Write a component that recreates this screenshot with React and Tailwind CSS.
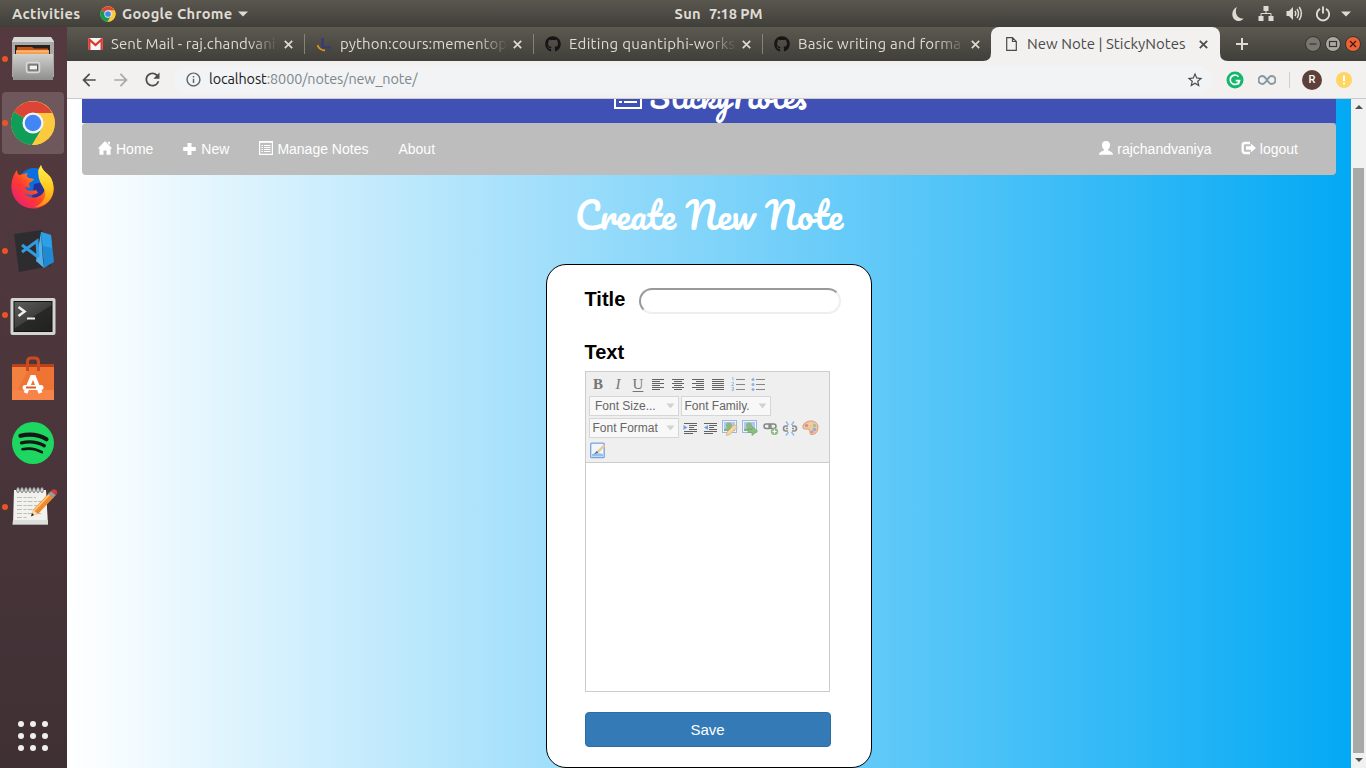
import React from "react";
import { MdArrowBack, MdArrowForward, MdRefresh, MdInfoOutline, MdStarBorder } from "react-icons/md";
import { FaGithub } from "react-icons/fa";

const UI = "font-['Ubuntu','Noto_Sans','Open_Sans',sans-serif]";

function ChromeLogo({ size }) {
  return (
    <svg width={size} height={size} viewBox="0 0 48 48">
      <circle cx="24" cy="24" r="23" fill="#fdc93e" />
      <path d="M24 24 L4.1 12.5 A23 23 0 0 1 43.9 13.5 L24 13.5 Z" fill="#db4437" />
      <path d="M24 24 L4.1 12.5 A23 23 0 0 0 23 47 L33.5 29.5 Z" fill="#109d58" />
      <path d="M24 13.5 H43.9 A23 23 0 0 1 23 47 L33.5 29.5 Z" fill="#fdc93e" />
      <circle cx="24" cy="24" r="11" fill="#f4f4f4" />
      <circle cx="24" cy="24" r="8.6" fill="#4285f4" />
    </svg>
  );
}

function TopBar() {
  return (
    <header className={`grid h-[27px] shrink-0 grid-cols-3 items-center bg-linear-to-b from-[#5a574f] to-[#403f3a] text-[14.67px] font-bold text-[#dfdbd2] ${UI}`}>
      <div className="flex items-center pl-3">
        <span className="w-[88px] whitespace-nowrap tracking-[0.32px]">Activities</span>
        <ChromeLogo size={16} />
        <span className="ml-[6px] w-[111px] whitespace-nowrap tracking-[0.3px]">Google Chrome</span>
        <svg className="ml-[5px]" width="10" height="6"><path d="M0 0.5H10L5 5.5Z" fill="#dfdbd2" /></svg>
      </div>
      <div className="flex justify-center gap-[8px] pl-[71px] whitespace-nowrap"><span className="tracking-[0.3px]">Sun</span><span className="tracking-[-0.1px]">7:18 PM</span></div>
      <div className="flex items-center justify-end pr-[15px]">
        <svg width="14" height="16" viewBox="0 0 14 16" className="mr-[13px]"><path d="M6 1 C-1 4 0 15 8 15 C10 15 11.500 14 12.500 12.600 C6 13 3 6 6 1Z" fill="#dfdbd2" /></svg>
        <svg width="16" height="15" viewBox="0 0 16 15" className="mr-[12px]"><path d="M5.500 0h5v5h-5zM0.500 10h5v5h-5zM10.500 10h5v5h-5z" fill="#dfdbd2" /><path d="M8 5v2.500M3 10V7.500H13V10" fill="none" stroke="#dfdbd2" /></svg>
        <svg width="17" height="15" viewBox="0 0 17 15" className="mr-[12px]"><path d="M0.500 5H3L7 1V14L3 10H0.500Z" fill="#dfdbd2" /><path d="M9 5Q10.500 7.500 9 10M11 3Q14 7.500 11 12M13.200 1Q17.500 7.500 13.200 14" fill="none" stroke="#dfdbd2" strokeWidth="1.500" /></svg>
        <svg width="16" height="16" viewBox="0 0 16 16" className="mr-[10px]"><path d="M5 2.800A6.200 6.200 0 1 0 11 2.800M8 0.500V7.500" fill="none" stroke="#dfdbd2" strokeWidth="1.900" /></svg>
        <svg width="10" height="6"><path d="M0 0.500H10L5 5.500Z" fill="#dfdbd2" /></svg>
      </div>
    </header>
  );
}

function FilesIcon() {
  return (
    <svg width="46" height="48" viewBox="0 0 46 48">
      <defs><linearGradient id="fc" x2="0" y2="1"><stop stopColor="#d0d0ce" /><stop offset="1" stopColor="#8f8f8e" /></linearGradient></defs>
      <path d="M4 2H41L44 6V42H2V6Z" fill="#aaa9a8" />
      <path d="M4 2H41L44 7H2Z" fill="#d8d8d7" />
      <path d="M5 10H40V20H5Z" fill="#26221f" />
      <path d="M7 12H22L24 13.500H38V20H7Z" fill="#c75417" />
      <path d="M6 15.500H39V20H6Z" fill="#f5a04d" /><path d="M6 16H39" stroke="#ffd09b" />
      <path d="M3 19H43V45H3Z" fill="url(#fc)" />
      <rect x="16.500" y="27.500" width="13" height="10" rx="2" fill="#a4a4a4" stroke="#d9d9d9" strokeWidth="1.500" />
      <rect x="19" y="30" width="8.500" height="5" fill="#f2f2f2" stroke="#555" />
    </svg>
  );
}

function FirefoxIcon() {
  return (
    <svg width="46" height="46" viewBox="0 0 46 46">
      <defs>
        <linearGradient id="ff" x1="0" y1="1" x2="1" y2="0"><stop stopColor="#e31587" /><stop offset="0.400" stopColor="#ff3b30" /><stop offset="0.700" stopColor="#ff980e" /><stop offset="1" stopColor="#ffe226" /></linearGradient>
        <linearGradient id="fy" x2="0" y2="1"><stop stopColor="#fff44f" /><stop offset="0.600" stopColor="#ffc31a" /><stop offset="1" stopColor="#ff8a16" /></linearGradient>
      </defs>
      <circle cx="24" cy="20" r="16" fill="#0a6fe0" />
      <path d="M24 20 L38 17 L34 34 L22 34Z" fill="#26329a" />
      <path d="M7 6 C7 9 8 10 9 11 L18 9 C16 12 17 13 19 14 L24 15 C23 18 19 18 19 20 L20 24 C18 24 16 23 15 23 C16 28 23 27 26 26 L28 29 C22 32 17 31 14 29 C20 36 32 35 35 25 C37 17 27 14 28 6 L31 1 C32 7 38 10 41 14 C49 31 37 44.500 23 44.500 C9 44.500 0 32 1.500 20 C2 14 4 10 7 6Z" fill="url(#ff)" />
      <path d="M31 1 C32 7 38 9 41 14 C49 31 37 43 25 43 C35 38 37 31 34 25 C31 19 25 12 31 1Z" fill="url(#fy)" />
    </svg>
  );
}

function CodeIcon() {
  return (
    <svg width="46" height="46" viewBox="0 0 46 46">
      <path d="M4 6L32 2L41 38L9 44Z" fill="#2d2d30" />
      <path d="M31 4L41 7L44 34L34 40Z" fill="#1f8ad2" /><path d="M31 4L33 33L34 40L26 33Z" fill="#54aeea" />
      <path d="M12 17L28 29M12 24L27 13L28 29" fill="none" stroke="#329be0" strokeWidth="3" />
      <path d="M31 4L41 7L42 20L33 18Z" fill="#2c9fe7" />
    </svg>
  );
}

function TerminalIcon() {
  return (
    <svg className="mt-[4px]" width="46" height="40" viewBox="0 0 46 40">
      <defs><linearGradient id="tm" x2="0.800" y2="1"><stop stopColor="#5e5e5c" /><stop offset="0.550" stopColor="#3f3f3e" /><stop offset="0.560" stopColor="#292928" /><stop offset="1" stopColor="#222" /></linearGradient></defs>
      <rect x="0.500" y="1" width="45" height="37" rx="2" fill="#d3d3d1" /><rect x="4" y="4.500" width="38" height="30" fill="url(#tm)" stroke="#111" />
      <path d="M8.500 10L14.500 14.500L8.500 19" fill="none" stroke="#eee" strokeWidth="2.600" /><path d="M17 21.500H25" stroke="#eee" strokeWidth="2" />
    </svg>
  );
}

function SoftwareIcon() {
  return (
    <svg width="46" height="46" viewBox="0 0 46 46">
      <path d="M2 8H44V16H2Z" fill="#b9411c" /><path d="M2 11H44V44H2Z" fill="#ef7434" /><path d="M2 11H20L2 44Z" fill="#f48b4a" opacity=".6" /><path d="M2 34H44V44H2Z" fill="#f7854a" />
      <path d="M17.500 15V6Q17.500 2 21 2H25Q28.500 2 28.500 6V15" fill="none" stroke="#c94b20" strokeWidth="3" />
      <path d="M15.500 37L22 21H24L30.500 37" fill="none" stroke="#fff" strokeWidth="4" />
      <path d="M15 31.500H31" stroke="#fff" strokeWidth="5" strokeLinecap="round" /><path d="M16 31.500H26" stroke="#df5a26" strokeWidth="2" />
    </svg>
  );
}

function SpotifyIcon() {
  return (
    <svg width="44" height="44" viewBox="0 0 44 44">
      <circle cx="22" cy="22" r="21" fill="#1ed760" />
      <g fill="none" stroke="#171717" strokeLinecap="round"><path d="M9.500 14.800Q24 11.500 35.500 18.200" strokeWidth="4.200" /><path d="M10.500 21.800Q23 19 33.300 24.800" strokeWidth="3.300" /><path d="M11.500 28.200Q22 26 30.800 31.200" strokeWidth="2.700" /></g>
    </svg>
  );
}

function NotepadIcon() {
  return (
    <svg width="48" height="44" viewBox="0 0 48 44">
      <path d="M5 5H37L39 40H4Z" fill="#f1f1ee" /><path d="M4 35H38.700L39 39H3.500Z" fill="#dddddA" /><path d="M3.500 39.500H39" stroke="#aaa" />
      <g stroke="#bdbdba"><path d="M8 12.500H27M8 16.500H34M8 20.500H30M8 24.500H24M8 28.500H32M8 32.500H18" strokeDasharray="5 1.500 3 1" /></g>
      <g fill="none" stroke="#777" strokeWidth="1">{[9, 13, 17, 21, 25, 29, 33].map((x) => <ellipse key={x} cx={x} cy="5" rx="1.300" ry="2.600" fill="#eee" />)}</g>
      <path d="M24 25L40 8L45 12L29 29L22.500 31Z" fill="#ef8b2c" /><path d="M25 26L41 9" stroke="#ffc983" strokeWidth="1.500" /><path d="M24 25L29 29L22.500 31Z" fill="#f3ddbb" /><path d="M23 28L25 30L22 31.500Z" fill="#222" />
      <path d="M39 9L42 6L47 10L44 13Z" fill="#999" /><path d="M42 6Q44 3 47 5T47 10Z" fill="#d33a3a" />
    </svg>
  );
}

const dock = [
  { id: "files", icon: <FilesIcon />, run: true },
  { id: "chrome", icon: <ChromeLogo size={46} />, run: true, active: true },
  { id: "firefox", icon: <FirefoxIcon /> },
  { id: "code", icon: <CodeIcon />, run: true },
  { id: "terminal", icon: <TerminalIcon />, run: true },
  { id: "software", icon: <SoftwareIcon /> },
  { id: "spotify", icon: <SpotifyIcon /> },
  { id: "notepad", icon: <NotepadIcon />, run: true },
];

function Dock() {
  return (
    <aside className="flex w-[67px] shrink-0 flex-col bg-linear-to-b from-[#543a3f] via-[#4b363c] to-[#3f3034]">
      <div className="flex flex-col gap-[2px] pt-[1px]">
        {dock.map((d) => (
          <div key={d.id} className={`relative ml-[2px] flex h-[62px] w-[62px] items-center justify-center rounded-[4px] ${d.active ? "bg-[#6e585c]" : ""}`}>
            {d.icon}
            {d.run && <span className="absolute left-0 top-[28px] h-[6px] w-[6px] rounded-full bg-[#e95420]" />}
          </div>
        ))}
      </div>
      <div className="mt-auto mb-[17px] ml-[18px] grid w-[30px] grid-cols-3 gap-[6px]">
        {[...Array(9).keys()].map((i) => <span key={i} className="h-[6px] w-[6px] rounded-full bg-[#f0efee]" />)}
      </div>
    </aside>
  );
}

function Close({ className }) {
  return <svg className={className} width="9" height="9"><path d="M0.800 0.800L8.200 8.200M8.200 0.800L0.800 8.200" stroke="currentColor" strokeWidth="1.700" /></svg>;
}

function Gmail() {
  return <svg width="15" height="12" viewBox="0 0 15 12"><path d="M0 0H15V12H0Z" fill="#f5f5f5" /><path d="M1.300 12V1.500L7.500 7L13.700 1.500V12" fill="none" stroke="#d93a30" strokeWidth="2.300" /></svg>;
}
function Moodle() {
  return <svg width="15" height="15" viewBox="0 0 15 15"><path d="M5.500 1V8.500Q5.500 10.500 8 10.500H14" fill="none" stroke="#343a7d" strokeWidth="2.200" /><path d="M0.500 8Q2 13 8 13.500" fill="none" stroke="#e0941e" strokeWidth="1.800" /></svg>;
}

const tabs = [
  { t: "Sent Mail - raj.chandvani", icon: <Gmail />, cls: "tracking-[0.1px]" },
  { t: "python:cours:mementop", icon: <Moodle />, cls: "tracking-[0.05px]" },
  { t: "Editing quantiphi-works", icon: <FaGithub size={16} color="#161414" />, cls: "tracking-[0.3px]" },
  { t: "Basic writing and forma", icon: <FaGithub size={16} color="#161414" />, cls: "tracking-[0.22px]" },
];

function TabStrip() {
  return (
    <div className={`flex h-[34px] shrink-0 bg-linear-to-b from-[#5c5950] to-[#403f3a] pl-[8px] text-[15px] text-[#dfdbd2] ${UI}`}>
      {tabs.map((tab, i) => (
        <div key={tab.t} className="flex w-[229px] items-center pl-[12px]">
          <span className="flex w-[16px] justify-center">{tab.icon}</span>
          <span className={`ml-[8px] w-[168px] whitespace-nowrap mask-r-from-82% ${tab.cls}`}>{tab.t}</span>
          <Close className="ml-[5px]" />
          <span className={`mr-[-1px] ml-auto h-[20px] w-px ${i < 3 ? "bg-[#85827a]" : ""}`} />
        </div>
      ))}
      <div className="relative flex w-[229px] items-center rounded-t-[8px] bg-[#f2f1f0] pl-[15px] text-[#4a4a4a]">
        <svg className="absolute bottom-0 -left-[8px]" width="8" height="8"><path d="M8 0V8H0Q8 8 8 0Z" fill="#f2f1f0" /></svg>
        <svg className="absolute bottom-0 -right-[8px]" width="8" height="8"><path d="M0 0V8H8Q0 8 0 0Z" fill="#f2f1f0" /></svg>
        <svg width="11" height="14"><path d="M0.700 0.700H6.500L10.300 4.500V13.300H0.700ZM6.500 0.700V4.500H10.300" fill="none" stroke="#4a4a4a" strokeWidth="1.200" /></svg>
        <span className="ml-[10px] w-[172px] whitespace-nowrap tracking-[0.03px]">New Note | StickyNotes</span>
        <Close />
      </div>
      <div className="ml-[16px] flex flex-1 items-center">
        <svg width="12" height="12"><path d="M6 0V12M0 6H12" stroke="#dfdbd2" strokeWidth="2" /></svg>
        <div className="mr-[5px] ml-auto flex gap-[4px]">
          <svg width="16" height="16"><circle cx="8" cy="8" r="7.500" fill="#797770" stroke="#353430" /><path d="M4.500 8H11.500" stroke="#353430" strokeWidth="1.200" /></svg>
          <svg width="16" height="16"><circle cx="8" cy="8" r="7.500" fill="#aaa8a2" stroke="#353430" /><rect x="4.500" y="5.500" width="7" height="5" fill="none" stroke="#353430" strokeWidth="1.200" /></svg>
          <svg width="16" height="16"><circle cx="8" cy="8" r="7.500" fill="#ee6238" stroke="#353430" /><path d="M5 5L11 11M11 5L5 11" stroke="#45180b" strokeWidth="1.300" /></svg>
        </div>
      </div>
    </div>
  );
}

function Toolbar() {
  return (
    <div className={`flex h-[38px] shrink-0 items-center border-b border-[#cccbca] bg-[#f2f1f0] pl-[12px] text-[#4c4c4c] ${UI}`}>
      <MdArrowBack size={20} />
      <MdArrowForward size={20} className="ml-[12px] text-[#a9a8a7]" />
      <MdRefresh size={21} className="ml-[11px]" />
      <div className="ml-[11px] flex h-[28px] w-[1038px] items-center rounded-full bg-[#f1f3f4] pr-[8px] pl-[11px]">
        <MdInfoOutline size={17} className="text-[#5f6368]" />
        <span className="ml-[7px] text-[14.4px] tracking-[-0.1px] text-[#80868b]"><span className="text-[#202124]">localhost</span>:8000/notes/new_note/</span>
        <MdStarBorder size={18} className="ml-auto" />
      </div>
      <svg className="ml-[14px]" width="18" height="18"><circle cx="9" cy="9" r="8.500" fill="#15b76c" /><path d="M12.500 5.700A4.700 4.700 0 1 0 13.500 9.700H9.700M13.500 9.700L12.200 13.500" fill="none" stroke="#fff" strokeWidth="1.700" /></svg>
      <svg className="ml-[14px]" width="18" height="12"><path d="M9 6C7 3 6 2 4.500 2A4 4 0 0 0 4.500 10C6 10 7 9 9 6C11 3 12 2 13.500 2A4 4 0 0 1 13.500 10C12 10 11 9 9 6Z" fill="none" stroke="#8798a1" strokeWidth="2" /></svg>
      <span className="ml-[13px] h-[16px] w-px bg-[#cfcfce]" />
      <span className="ml-[12px] flex h-[20px] w-[20px] items-center justify-center rounded-full bg-[#5d4037] pt-[1px] font-[Roboto,sans-serif] text-[11px] font-medium text-white">R</span>
      <svg className="ml-[14px]" width="16" height="16"><circle cx="8" cy="8" r="8" fill="#fdd663" /><path d="M8 3.500V9M8 10.500V12.500" stroke="#fff" strokeWidth="2" /></svg>
    </div>
  );
}

function ListGlyph({ size }) {
  return <svg width={size} height={size} viewBox="0 0 14 14" fill="none" stroke="currentColor"><path d="M0.600 0.600H13.400V13.400H0.600Z" strokeWidth="1.200" /><path d="M0.600 1.200H13.400" strokeWidth="1.200" /><path d="M2.500 4.500H4M5 4.500H11.500M2.500 6.500H4M5 6.500H11.500M2.500 8.500H4M5 8.500H11.500M2.500 10.500H4M5 10.500H11.500" /></svg>;
}

function NavItem({ icon, children, gap = "gap-[4px]" }) {
  return <a className={`flex items-center whitespace-nowrap ${gap}`}>{icon}{children}</a>;
}

function Nav() {
  return (
    <nav className="flex h-[52px] shrink-0 items-center gap-[30px] rounded-[4px] bg-[#bdbdbd] pr-[38px] pl-[16px] text-[14px] text-white">
      <NavItem icon={<svg className="mb-[2px]" width="14" height="14" viewBox="0 0 14 14"><path d="M7 0L14.200 7.500H12.500V13.800H8.500V9.500H5.500V13.800H1.500V7.500H-0.200L7 0ZM9.800 0.800H12V4L9.800 2Z" fill="#fff" /></svg>}>Home</NavItem>
      <NavItem gap="gap-[5px]" icon={<svg className="mb-px" width="13" height="14" viewBox="0 0 13 14"><path d="M4.500 1H8.500V5H12.800V9H8.500V13H4.500V9H0.200V5H4.500Z" fill="#fff" /></svg>}>New</NavItem>
      <NavItem icon={<span className="mb-[2px]"><ListGlyph size={14} /></span>}>Manage Notes</NavItem>
      <NavItem>About</NavItem>
      <span className="flex-1" />
      <NavItem icon={<svg className="mb-[2px]" width="14" height="14" viewBox="0 0 14 14"><path d="M7 0C9.500 0 11 1.500 11 4C11 6 10.200 7.500 9 8.500V9.500C11 10.300 14 11 14 13.800H0C0 11 3 10.300 5 9.500V8.500C3.800 7.500 3 6 3 4C3 1.500 4.500 0 7 0Z" fill="#fff" /></svg>}>rajchandvaniya</NavItem>
      <NavItem icon={<svg className="mb-[2px] -ml-[0.6px]" width="15" height="14" viewBox="0 0 15 14"><path d="M9 2H4Q1.700 2 1.700 4V9.500Q1.700 12 4 12H9" fill="none" stroke="#fff" strokeWidth="2.300" /><path d="M5 5.200H9.800V2.500L15 7L9.800 11.500V8.800H5Z" fill="#fff" /></svg>}>logout</NavItem>
    </nav>
  );
}

function Lines({ kind }) {
  const widths = { left: [[1, 13], [1, 9], [1, 13], [1, 9], [1, 13], [1, 9]], center: [[1, 13], [3, 11], [1, 13], [3, 11], [1, 13], [3, 11]], right: [[1, 13], [5, 13], [1, 13], [5, 13], [1, 13], [5, 13]], full: [[1, 13], [1, 13], [1, 13], [1, 13], [1, 13], [1, 13]] }[kind];
  return <svg width="14" height="13">{widths.map(([a, b], i) => <path key={i} d={`M${a} ${i * 2 + 1.5}H${b}`} stroke="#626262" />)}</svg>;
}
function OrderedIcon() {
  return <svg width="14" height="14"><path d="M5 2.500H14M5 7.500H14M5 12.500H14" stroke="#858585" /><path d="M1 1L2 0.500V3.500M0.500 5.500H2.500V7L0.500 8.500H3M0.500 10.500H2.500V13.500H0.500M1 12H2.500" fill="none" stroke="#91b1e6" strokeWidth=".8" /></svg>;
}
function BulletIcon() {
  return <svg width="14" height="14"><path d="M5 2.500H14M5 7.500H14M5 12.500H14" stroke="#858585" /><g fill="#91b1e6"><circle cx="2" cy="2.500" r="1.500" /><circle cx="2" cy="7.500" r="1.500" /><circle cx="2" cy="12.500" r="1.500" /></g></svg>;
}
function IndentIcon({ out }) {
  return <svg width="15" height="13"><path d="M1 1.500H14M6 3.500H14M6 5.500H11M6 7.500H14M1 9.500H14M1 11.500H10" stroke="#626262" />{out ? <path d="M5 3L1 5.500L5 8Z" fill="#72a0e8" /> : <path d="M0.500 3L4.500 5.500L0.500 8Z" fill="#72a0e8" />}</svg>;
}
function ImageIcon({ arrow }) {
  return (
    <svg className="opacity-80" width="16" height="16" viewBox="0 0 16 16"><rect x="0.500" y="0.500" width="14" height="12" fill="#eef5ff" stroke="#88aade" /><rect x="2" y="2" width="11" height="9" fill="#9fc0e8" /><circle cx="7" cy="5.500" r="3" fill="#78a866" /><path d="M2 9Q7 7 13 9V11H2Z" fill="#6ba366" />
      {arrow ? <path d="M6 9.500H10V6.500L15.500 11L10 15.500V12.500H6Z" fill="#73b463" stroke="#4e9347" strokeWidth=".7" /> : <path d="M5 12L12.500 4.500L15.500 7L8 14.500L4.500 15.500Z" fill="#f6cf92" stroke="#c69047" strokeWidth=".6" />}
    </svg>
  );
}
function LinkIcon() {
  return <svg className="mt-[2px] ml-[2px]" width="16" height="14" viewBox="0 0 16 14"><g fill="none" stroke="#858585" strokeWidth="1.500"><rect x="1" y="2" width="7" height="4.500" rx="2.200" /><rect x="6" y="2" width="7" height="4.500" rx="2.200" /></g><circle cx="11.500" cy="9.500" r="3.600" fill="#8eb97c" /><path d="M11.500 7.500V11.500M9.500 9.500H13.500" stroke="#fff" strokeWidth="1.200" /></svg>;
}
function UnlinkIcon() {
  return <svg width="16" height="15" viewBox="0 0 16 15"><path d="M6 5H4Q1.500 5 1.500 7.500T4 10H6M10 5H12Q14.500 5 14.500 7.500T12 10H10M4 7.500H6M10 7.500H12" fill="none" stroke="#8b8b8b" strokeWidth="1.600" /><path d="M4 0.500L6.500 4M12 0.500L9.500 4M4 14.500L6.500 11M12 14.500L9.500 11" stroke="#91b6f0" strokeWidth="1.400" /></svg>;
}
function PaletteIcon() {
  return <svg className="opacity-75" width="17" height="16" viewBox="0 0 17 16"><path d="M3 3C8-1 16 1 16 7C16 12 13 15 9 14.500C7 14 9 11 7 9.500C5 8.500 1 10 0.800 7.500C0.700 6 1.500 4 3 3Z" fill="#f0b88a" stroke="#c9804f" /><circle cx="4.500" cy="5.500" r="1.600" fill="#d9635b" /><circle cx="8.500" cy="3.500" r="1.500" fill="#ead06a" /><circle cx="12.500" cy="5.500" r="1.600" fill="#75b870" /><circle cx="12.500" cy="9.500" r="1.700" fill="#6e95da" /><circle cx="10" cy="12" r="1.300" fill="#d96a61" /></svg>;
}
function EditHtmlIcon() {
  return <svg className="opacity-90" width="16" height="17" viewBox="0 0 16 17"><rect x="0.700" y="1.200" width="13.500" height="14.500" rx="1" fill="#f1f7ff" stroke="#6b9ad8" strokeWidth="1.300" /><path d="M2 12Q8 10.500 13 12V14.500H2Z" fill="#8bbcf0" /><path d="M6 10.500L7 9L13.500 2.500L15.500 4L9 10.500Z" fill="#edc68c" /><path d="M4 12.500L6.500 9L8.500 10.500Z" fill="#515e74" /></svg>;
}

function Btn({ children }) {
  return <span className="flex h-[20px] w-[20px] shrink-0 items-center justify-center">{children}</span>;
}
function Select({ children, pad }) {
  return (
    <span className={`flex h-[20px] w-[90px] items-center border border-[#d6d6d6] bg-[#f8f8f8] pr-[3px] text-[12px] whitespace-nowrap text-[#666] ${pad}`}>
      {children}
      <svg className="ml-auto" width="9" height="6"><path d="M0.500 0.500H8.500L4.500 5.500Z" fill="#d2d2d2" /></svg>
    </span>
  );
}

function Editor() {
  return (
    <div className="flex h-[321px] w-[245px] flex-col border border-[#ccc]">
      <div className="h-[91px] border-b border-[#ccc] bg-[#efefef] pt-[1px] pl-[2px] font-['Liberation_Sans',Arial,sans-serif]">
        <div className="flex h-[22px] items-center font-['Liberation_Serif',serif] text-[15px] leading-none text-[#757575]">
          <Btn><b>B</b></Btn><Btn><i>I</i></Btn><Btn><span className="underline underline-offset-2">U</span></Btn>
          <Btn><Lines kind="left" /></Btn><Btn><Lines kind="center" /></Btn><Btn><Lines kind="right" /></Btn><Btn><Lines kind="full" /></Btn>
          <Btn><OrderedIcon /></Btn><Btn><BulletIcon /></Btn>
        </div>
        <div className="flex h-[22px] items-center gap-[2px] pl-[1px]"><Select pad="pl-[5px]">Font Size...</Select><Select pad="pl-[2.5px]">Font Family.</Select></div>
        <div className="flex h-[22px] items-center pl-[1px]">
          <Select pad="pl-[2.5px]">Font Format</Select><span className="w-px" />
          <Btn><IndentIcon /></Btn><Btn><IndentIcon out /></Btn><Btn><ImageIcon /></Btn><Btn><ImageIcon arrow /></Btn><Btn><LinkIcon /></Btn><Btn><UnlinkIcon /></Btn><Btn><PaletteIcon /></Btn>
        </div>
        <div className="flex h-[22px] items-center"><Btn><EditHtmlIcon /></Btn></div>
      </div>
      <div className="flex-1 bg-white" />
    </div>
  );
}

const SCRIPT = "font-['Pacifico','Lato',cursive] font-normal";

function Page() {
  return (
    <main className="flex flex-1 flex-col overflow-hidden bg-linear-to-r/srgb from-white to-[#03a9f4] px-[15px] font-['Liberation_Sans',Arial,sans-serif]">
      <div className="flex h-[24px] shrink-0 items-end justify-center overflow-hidden bg-[#3f51b5] text-white">
        <div className="flex items-end gap-[8px] pl-px">
          <span className="mb-[14px]"><svg width="28" height="26" viewBox="0 0 28 26"><path d="M1 1H27V25H1Z" fill="none" stroke="#fff" strokeWidth="2" /><path d="M5 12H8M10 12H23M5 19H8M10 19H23" stroke="#fff" strokeWidth="2" /></svg></span>
          <span className={`w-[156px] text-[30px] leading-[53px] whitespace-nowrap ${SCRIPT}`}>StickyNotes</span>
        </div>
      </div>
      <Nav />
      <h1 className={`flex h-[89px] shrink-0 items-center justify-center pb-[9px] text-[36px] whitespace-nowrap text-white ${SCRIPT}`}>Create New Note</h1>
      <form className="mx-auto flex h-[504px] w-[326px] shrink-0 flex-col rounded-[20px] border border-black bg-white pl-[38px] text-black">
        <div className="mt-[23px] flex h-[26px] items-center">
          <label className="mb-[4px] -ml-[0.5px] w-[54.5px] text-[20px] leading-[22px] font-bold">Title</label>
          <input className="h-[26px] w-[202px] rounded-[15px] border-2 border-t-[#999] border-r-[#eee] border-b-[#eee] border-l-[#999] bg-white" />
        </div>
        <label className="mt-[27px] mb-[8px] -ml-[0.5px] text-[20px] leading-[22px] font-bold">Text</label>
        <Editor />
        <button type="button" className="mt-[20px] h-[35px] w-[246px] rounded-[4px] border border-[#2e6da4] bg-[#337ab7] pt-[2px] pr-[1px] text-[15px] text-white">Save</button>
      </form>
    </main>
  );
}

function Scrollbar() {
  return (
    <div className="flex w-[15px] shrink-0 flex-col items-center bg-[#f1f1f1]">
      <svg className="mt-[6px]" width="8" height="4"><path d="M0 4H8L4 0Z" fill="#505050" /></svg>
      <div className="mt-[59px] mr-px h-[585px] w-[11px] bg-[#a8a8a8]" />
      <svg className="mt-[5px]" width="8" height="4"><path d="M0 0H8L4 4Z" fill="#505050" /></svg>
    </div>
  );
}

export default function App() {
  return (
    <div className="flex h-[768px] w-[1366px] flex-col overflow-hidden">
      <TopBar />
      <div className="flex min-h-0 flex-1">
        <Dock />
        <div className="flex min-w-0 flex-1 flex-col bg-[#403f3a]">
          <TabStrip />
          <Toolbar />
          <div className="flex min-h-0 flex-1"><Page /><Scrollbar /></div>
        </div>
      </div>
    </div>
  );
}
